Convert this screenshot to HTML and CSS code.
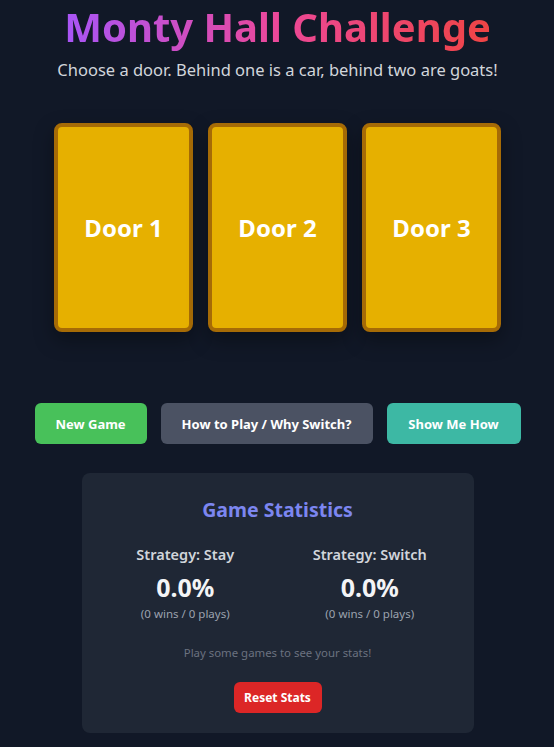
FILE: index.html
```html
<!DOCTYPE html>
<html lang="en">
<head>
<meta charset="utf-8">
<title>Monty Hall Challenge</title>
<link rel="stylesheet" href="styles.css">
</head>
<body>
<main class="app">
  <h1 class="title">Monty Hall Challenge</h1>
  <p class="subtitle">Choose a door. Behind one is a car, behind two are goats!</p>
  <section class="doors">
    <div class="door">Door 1</div>
    <div class="door">Door 2</div>
    <div class="door">Door 3</div>
  </section>
  <section class="actions">
    <button class="btn btn-green">New Game</button>
    <button class="btn btn-gray">How to Play / Why Switch?</button>
    <button class="btn btn-teal">Show Me How</button>
  </section>
  <section class="stats">
    <h2 class="stats-title">Game Statistics</h2>
    <div class="stats-grid">
      <div class="stat">
        <div class="stat-label">Strategy: Stay</div>
        <div class="stat-value">0.0%</div>
        <div class="stat-sub">(0 wins / 0 plays)</div>
      </div>
      <div class="stat">
        <div class="stat-label">Strategy: Switch</div>
        <div class="stat-value">0.0%</div>
        <div class="stat-sub">(0 wins / 0 plays)</div>
      </div>
    </div>
    <p class="stats-note">Play some games to see your stats!</p>
    <button class="btn-reset">Reset Stats</button>
  </section>
</main>
</body>
</html>
```
FILE: styles.css
```css
html, body {
  margin: 0;
  padding: 0;
  background: #111827;
  font-family: "Noto Sans", "Open Sans", sans-serif;
  color: #e5e7eb;
}
.app {
  display: flex;
  flex-direction: column;
  align-items: center;
  padding-left: 1px;
}
.title {
  margin: 0;
  margin-top: 3px;
  font-size: 40px;
  line-height: 48px;
  font-weight: 700;
  background: linear-gradient(90deg, #a855f7, #ec4899, #ef4444);
  -webkit-background-clip: text;
  background-clip: text;
  color: transparent;
}
.subtitle {
  margin: 7px 0 0;
  font-size: 16.5px;
  line-height: 24px;
  color: #d1d5db;
}
.doors {
  display: flex;
  gap: 15px;
  margin-top: 41px;
}
.door {
  width: 131px;
  height: 201px;
  background: #e6b000;
  border: 4px solid #a66b06;
  border-radius: 8px;
  display: flex;
  align-items: center;
  justify-content: center;
  color: #fff;
  font-weight: 700;
  font-size: 24px;
  box-shadow: 0 8px 20px rgba(0,0,0,0.35);
}
.actions {
  display: flex;
  gap: 14px;
  margin-top: 71px;
}
.btn {
  height: 41px;
  border: none;
  border-radius: 6px;
  color: #fff;
  font-family: inherit;
  font-weight: 700;
  font-size: 13px;
  padding: 0;
  white-space: nowrap;
}
.btn-green { background: #48c15a; width: 112px; }
.btn-gray { background: #4b5263; width: 212px; }
.btn-teal { background: #3db8a4; width: 134px; }
.stats {
  margin-top: 29px;
  width: 392px;
  box-sizing: border-box;
  background: #1f2735;
  border-radius: 8px;
  padding: 23px 24px 20px;
  display: flex;
  flex-direction: column;
  align-items: center;
}
.stats-title {
  margin: 0;
  font-size: 19.5px;
  line-height: 28px;
  color: #7c86f0;
  font-weight: 700;
}
.stats-grid {
  margin-top: 20px;
  display: grid;
  grid-template-columns: 1fr 1fr;
  column-gap: 25px;
  width: 100%;
}
.stat {
  display: flex;
  flex-direction: column;
  align-items: center;
}
.stat-label {
  font-size: 14.5px;
  line-height: 20px;
  font-weight: 600;
  color: #d1d5db;
}
.stat-value {
  margin-top: 7px;
  font-size: 25px;
  line-height: 32px;
  font-weight: 700;
  color: #f3f4f6;
}
.stat-sub {
  margin-top: 3px;
  font-size: 11.5px;
  line-height: 16px;
  color: #9ca3af;
}
.stats-note {
  margin: 23px 0 0;
  font-size: 11.4px;
  line-height: 16px;
  color: #6b7280;
}
.btn-reset {
  margin-top: 21px;
  height: 31px;
  width: 88px;
  border: none;
  border-radius: 6px;
  background: #dc2626;
  color: #fff;
  font-family: inherit;
  font-weight: 700;
  font-size: 12px;
}
```
